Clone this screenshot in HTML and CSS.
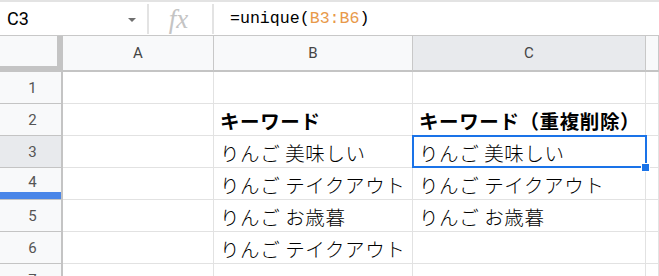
FILE: index.html
```html
<!DOCTYPE html>
<html lang="ja">
<head>
    <meta charset="UTF-8">
    <meta name="viewport" content="width=device-width, initial-scale=1.0">
    <title>unique</title>
    <link rel="stylesheet" href="styles.css">
</head>
<body>
    <div class="formula-bar">
        <div class="name-box">
            <span class="cell-ref">C3</span>
            <span class="caret"></span>
        </div>
        <div class="sep"></div>
        <div class="fx">fx</div>
        <div class="sep"></div>
        <div class="formula">=unique(<span class="range">B3:B6</span>)</div>
    </div>

    <div class="sheet">
        <div class="corner"></div>
        <div class="col-head">A</div>
        <div class="col-head">B</div>
        <div class="col-head active">C</div>
        <div class="col-head"></div>

        <div class="row-head">1</div>
        <div class="cell"></div>
        <div class="cell"></div>
        <div class="cell"></div>
        <div class="cell"></div>

        <div class="row-head">2</div>
        <div class="cell"></div>
        <div class="cell bold">キーワード</div>
        <div class="cell bold">キーワード（重複削除）</div>
        <div class="cell"></div>

        <div class="row-head active">3</div>
        <div class="cell"></div>
        <div class="cell">りんご 美味しい</div>
        <div class="cell selected">りんご 美味しい<span class="handle"></span></div>
        <div class="cell"></div>

        <div class="row-head resize">4</div>
        <div class="cell"></div>
        <div class="cell">りんご テイクアウト</div>
        <div class="cell">りんご テイクアウト</div>
        <div class="cell"></div>

        <div class="row-head">5</div>
        <div class="cell"></div>
        <div class="cell">りんご お歳暮</div>
        <div class="cell">りんご お歳暮</div>
        <div class="cell"></div>

        <div class="row-head">6</div>
        <div class="cell"></div>
        <div class="cell">りんご テイクアウト</div>
        <div class="cell"></div>
        <div class="cell"></div>

        <div class="row-head">7</div>
        <div class="cell"></div>
        <div class="cell"></div>
        <div class="cell"></div>
        <div class="cell"></div>
    </div>
</body>
</html>
```

FILE: styles.css
```css
* {
    box-sizing: border-box;
}
body {
    margin: 0;
    background: #fff;
    font-family: Roboto, "Liberation Sans", Arial, sans-serif;
    overflow: hidden;
}
.formula-bar {
    display: flex;
    align-items: center;
    height: 36px;
    border-top: 2px solid #e3e3e3;
    border-bottom: 1px solid #c8c8c8;
}
.name-box {
    display: flex;
    align-items: center;
    justify-content: space-between;
    width: 147px;
    padding: 0 11px 0 7px;
}
.cell-ref {
    font-size: 18px;
    color: #000;
}
.caret {
    width: 0;
    height: 0;
    border-left: 4px solid transparent;
    border-right: 4px solid transparent;
    border-top: 4px solid #6f6f6f;
    margin-top: 2px;
}
.sep {
    width: 2px;
    height: 30px;
    background: #e3e3e3;
}
.fx {
    width: 63px;
    text-align: center;
    font-family: "Liberation Serif", serif;
    font-style: italic;
    font-size: 27px;
    color: #c4c4c4;
    line-height: 30px;
    padding-right: 4px;
}
.formula {
    padding-left: 16px;
    font-family: "Liberation Mono", monospace;
    font-size: 16.6px;
    color: #000;
}
.range {
    color: #e8994a;
}
.sheet {
    display: grid;
    grid-template-columns: 63px 151px 199px 233px 1fr;
    grid-template-rows: 36px;
    grid-auto-rows: 32px;
}
.corner {
    background: #f8f9fa;
    border-right: 6px solid #c4c4c4;
    border-bottom: 6px solid #c4c4c4;
}
.col-head {
    display: flex;
    align-items: center;
    justify-content: center;
    background: #f8f9fa;
    border-right: 1px solid #c8c8c8;
    border-bottom: 2px solid #c4c4c4;
    font-size: 15px;
    color: #444;
}
.col-head.active {
    background: #e8eaed;
}
.row-head {
    display: flex;
    align-items: center;
    justify-content: center;
    background: #f8f9fa;
    border-right: 2px solid #c4c4c4;
    border-bottom: 1px solid #c4c4c4;
    font-size: 15px;
    color: #555;
    padding-left: 4px;
}
.row-head.active {
    background: #e8eaed;
}
.row-head.resize {
    box-shadow: inset 0 -7px 0 #4a86e8;
    padding-bottom: 4px;
}
.cell {
    position: relative;
    display: flex;
    align-items: center;
    padding: 2px 0 0 6px;
    border-right: 1px solid #e2e2e2;
    border-bottom: 1px solid #e2e2e2;
    font-family: "Noto Sans CJK JP", sans-serif;
    font-size: 19.5px;
    font-weight: 300;
    letter-spacing: 0.6px;
    color: #000;
    white-space: nowrap;
}
.cell.bold {
    font-weight: 700;
}
.cell.selected::after {
    content: "";
    position: absolute;
    top: -1px;
    left: -1px;
    right: -2px;
    bottom: -1px;
    border: 2px solid #1a73e8;
}
.handle {
    position: absolute;
    right: -5px;
    bottom: -5px;
    width: 9px;
    height: 9px;
    background: #1a73e8;
    border: 1px solid #fff;
    z-index: 1;
}
```
